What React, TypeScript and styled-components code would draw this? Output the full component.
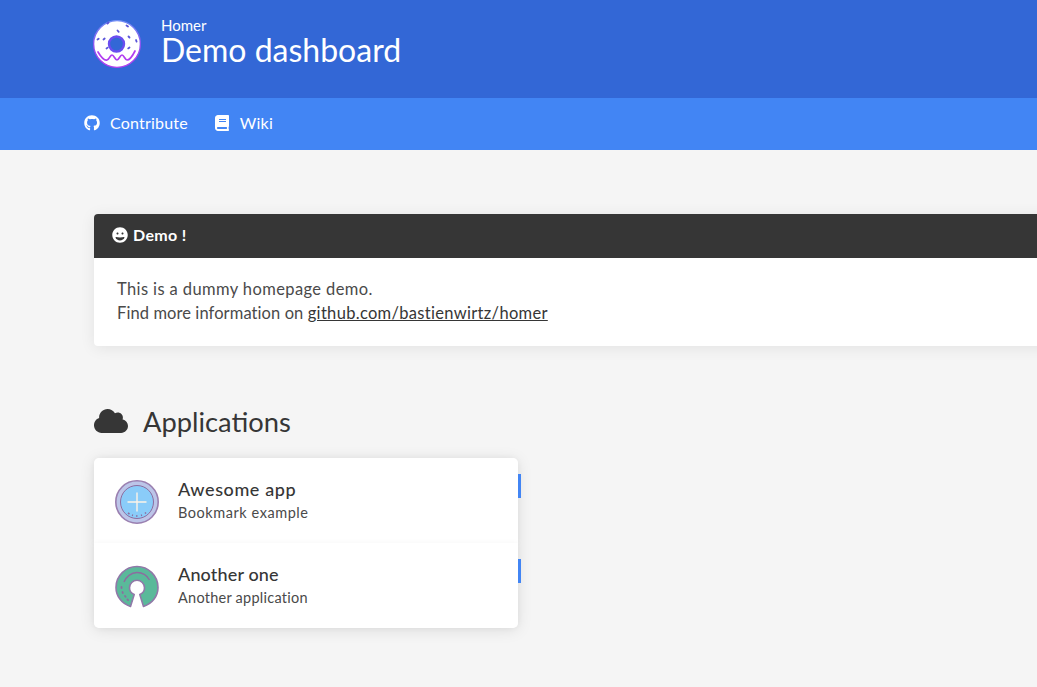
import React from 'react';
import styled, {createGlobalStyle} from 'styled-components';
import {FaBook, FaCloud, FaGithub, FaGrin} from 'react-icons/fa';

const GlobalStyle = createGlobalStyle`
  html, body {
    margin: 0;
    height: 100%;
    overflow: hidden;
    background: #f5f5f5;
  }
  body {
    font-family: "Lato", "Open Sans", sans-serif;
    font-size: 16px;
    color: #363636;
  }
`;

const Header = styled.header`
  height: 98px;
  background: #3367d6;
  padding-left: 93px;
  display: flex;
  align-items: flex-start;
`;

const Logo = styled.svg`
  width: 48px;
  height: 50px;
  margin-top: 19px;
  flex: none;
`;

const Titles = styled.div`
  margin-left: 20px;
  margin-top: 17px;
  color: #fff;
`;

const Subtitle = styled.div`
  font-size: 15px;
  line-height: 17px;
`;

const Title = styled.h1`
  margin: 0;
  font-size: 32px;
  line-height: 31px;
  font-weight: 400;
`;

const Navbar = styled.nav`
  height: 49px;
  padding: 0 0 3px 84px;
  background: #4285f4;
  display: flex;
  align-items: center;
  gap: 26px;
`;

const NavLink = styled.a`
  display: flex;
  align-items: center;
  gap: 10px;
  color: #fff;
  font-size: 16px;
  letter-spacing: 0.2px;
  text-decoration: none;

  svg {
    width: 16px;
    height: 16px;
    margin-top: 1px;
  }
`;

const Main = styled.main`
  padding: 64px 0 0 94px;
  width: 1272px;
`;

const Message = styled.article`
  border-radius: 4px;
  background: #fff;
  overflow: hidden;
  box-shadow: 0 2px 15px 0 rgba(0, 0, 0, 0.08);
`;

const MessageHeader = styled.div`
  height: 40px;
  padding: 0 0 4px 18px;
  background: #363636;
  color: #fff;
  display: flex;
  align-items: center;
  gap: 5px;
  font-weight: 700;
  font-size: 16px;
  letter-spacing: 0.35px;

  svg {
    width: 16px;
    height: 16px;
    margin-top: 1px;
  }
`;

const MessageBody = styled.div`
  padding: 19px 23px 21px;
  font-size: 16.5px;
  line-height: 24px;
  color: #4a4a4a;
`;

const MessageLine = styled.div<{$spacing: number}>`
  letter-spacing: ${p => p.$spacing}px;
`;

const MessageLink = styled.a`
  color: #363636;
  letter-spacing: 0.31px;
  text-decoration: underline;
`;

const GroupTitle = styled.h2`
  margin: 56px 0 0;
  height: 38px;
  padding-bottom: 2px;
  display: flex;
  align-items: center;
  gap: 15px;
  font-size: 27.3px;
  font-weight: 400;
  color: #363636;

  svg {
    width: 34px;
    height: 34px;
  }
`;

const CardList = styled.div`
  width: 424px;
  margin-top: 16px;
  border-radius: 5px;
  box-shadow: 0 2px 15px 0 rgba(0, 0, 0, 0.1);
`;

const Card = styled.div`
  position: relative;
  height: 85px;
  background: #fff;
  display: flex;
  align-items: center;
  padding-left: 21px;
  gap: 19px;
  box-shadow: 0 0 6px rgba(0, 0, 0, 0.04);

  &:first-child {
    border-radius: 5px 5px 0 0;
  }
  &:last-child {
    border-radius: 0 0 5px 5px;
  }
`;

const Tag = styled.span`
  position: absolute;
  right: -3px;
  top: 16px;
  width: 3px;
  height: 24px;
  background: #4285f4;
`;

const AppIcon = styled.svg`
  width: 44px;
  height: 44px;
  margin-top: 2px;
  flex: none;
`;

const CardText = styled.div`
  display: flex;
  flex-direction: column;
  gap: 2px;
`;

const CardName = styled.div<{$spacing: number}>`
  font-size: 18px;
  line-height: 22px;
  font-weight: 500;
  letter-spacing: ${p => p.$spacing}px;
  color: #363636;
`;

const CardSub = styled.div<{$spacing: number}>`
  font-size: 14.5px;
  line-height: 21px;
  letter-spacing: ${p => p.$spacing}px;
  color: #4a4a4a;
`;

const Donut = () => (
  <Logo viewBox="0 0 48 50">
    <defs>
      <linearGradient id="donutEdge" x1="0" y1="0" x2="0" y2="1">
        <stop offset="0" stopColor="#6f8cf5" />
        <stop offset="0.55" stopColor="#8a50f0" />
        <stop offset="1" stopColor="#b43cf0" />
      </linearGradient>
    </defs>
    <circle cx="24" cy="25" r="23.4" fill="#fff" stroke="url(#donutEdge)" strokeWidth="1.4" />
    <path d="M5 33C8 38 11 42 14 41S17 36 19 36S22 41 24 41S27 36 29 36S32 41 34 41S39 38 42 32" fill="none" stroke="#b13df0" strokeWidth="1.7" strokeLinecap="round" />
    <circle cx="23.5" cy="25" r="7.5" fill="#3367d6" stroke="#6a4df0" strokeWidth="2.4" />
    <g stroke="#5a55d8" strokeWidth="1.8" strokeLinecap="round">
      <path d="M14.5 4.5l1-1" />
      <path d="M33.5 6.5l1.5 1" />
      <path d="M24.5 11.5l1.2 1.3" />
      <path d="M10.5 20.5l1.2-1" />
      <path d="M35.5 17.5l1 1" />
      <path d="M4.5 20.5l1.2-.8" />
      <path d="M43 21l.6 1.6" />
      <path d="M13.5 29.5l1.2-.9" />
      <path d="M36.5 28.5l-1.3.9" />
    </g>
  </Logo>
);

const BookmarkIcon = () => (
  <AppIcon viewBox="0 0 44 44">
    <circle cx="22" cy="22" r="21.2" fill="#bcc5e8" stroke="#9a7fb0" strokeWidth="1.6" />
    <circle cx="22" cy="22" r="16.5" fill="#8accf9" stroke="#8d6c9f" strokeWidth="1" />
    <path d="M22 12.5v19M12.5 22h19" stroke="#fdf3e7" strokeWidth="1.4" />
    <path d="M13 33l1.5 1M17 35l1 .4M21 36h1.5M26 35.5l1-.4M30 33.5l1-1" stroke="#8d6c9f" strokeWidth="1.6" />
  </AppIcon>
);

const OpenSourceIcon = () => (
  <AppIcon viewBox="0 0 44 44">
    <path
      d="M15.5 41.5C6.5 38.5 1 31 1 22.5 1 11 10.5 1.5 22 1.5S43 11 43 22.5c0 8.5-5.5 16-14.5 19L24.8 29.5c3-1 4.7-3.7 4.7-6.7 0-4.2-3.4-7.5-7.5-7.5s-7.5 3.3-7.5 7.5c0 3 1.7 5.7 4.7 6.7z"
      fill="#5ab99a"
      stroke="#9178a8"
      strokeWidth="1.6"
      strokeLinejoin="round"
    />
    <path d="M9 17c2-5 7-9.5 13-9.5 5.5 0 10 3 12.5 7.5" fill="none" stroke="#8d6c9f" strokeWidth="1.4" />
    <path d="M6.5 22v1M7.5 27l.3 1M10 31l.6.8M12.5 34.5l.6.6" stroke="#8d6c9f" strokeWidth="1.8" strokeLinecap="round" />
  </AppIcon>
);

export default function App() {
  return (
    <>
      <GlobalStyle />
      <Header>
        <Donut />
        <Titles>
          <Subtitle>Homer</Subtitle>
          <Title>Demo dashboard</Title>
        </Titles>
      </Header>
      <Navbar>
        <NavLink href="#"><FaGithub />Contribute</NavLink>
        <NavLink href="#"><FaBook />Wiki</NavLink>
      </Navbar>
      <Main>
        <Message>
          <MessageHeader><FaGrin />Demo !</MessageHeader>
          <MessageBody>
            <MessageLine $spacing={0.39}>This is a dummy homepage demo.</MessageLine>
            <MessageLine $spacing={0.09}>
              Find more information on <MessageLink href="#">github.com/bastienwirtz/homer</MessageLink>
            </MessageLine>
          </MessageBody>
        </Message>
        <GroupTitle><FaCloud />Applications</GroupTitle>
        <CardList>
          <Card>
            <BookmarkIcon />
            <CardText>
              <CardName $spacing={0.6}>Awesome app</CardName>
              <CardSub $spacing={0.55}>Bookmark example</CardSub>
            </CardText>
            <Tag />
          </Card>
          <Card>
            <OpenSourceIcon />
            <CardText>
              <CardName $spacing={0.15}>Another one</CardName>
              <CardSub $spacing={0.25}>Another application</CardSub>
            </CardText>
            <Tag />
          </Card>
        </CardList>
      </Main>
    </>
  );
}
